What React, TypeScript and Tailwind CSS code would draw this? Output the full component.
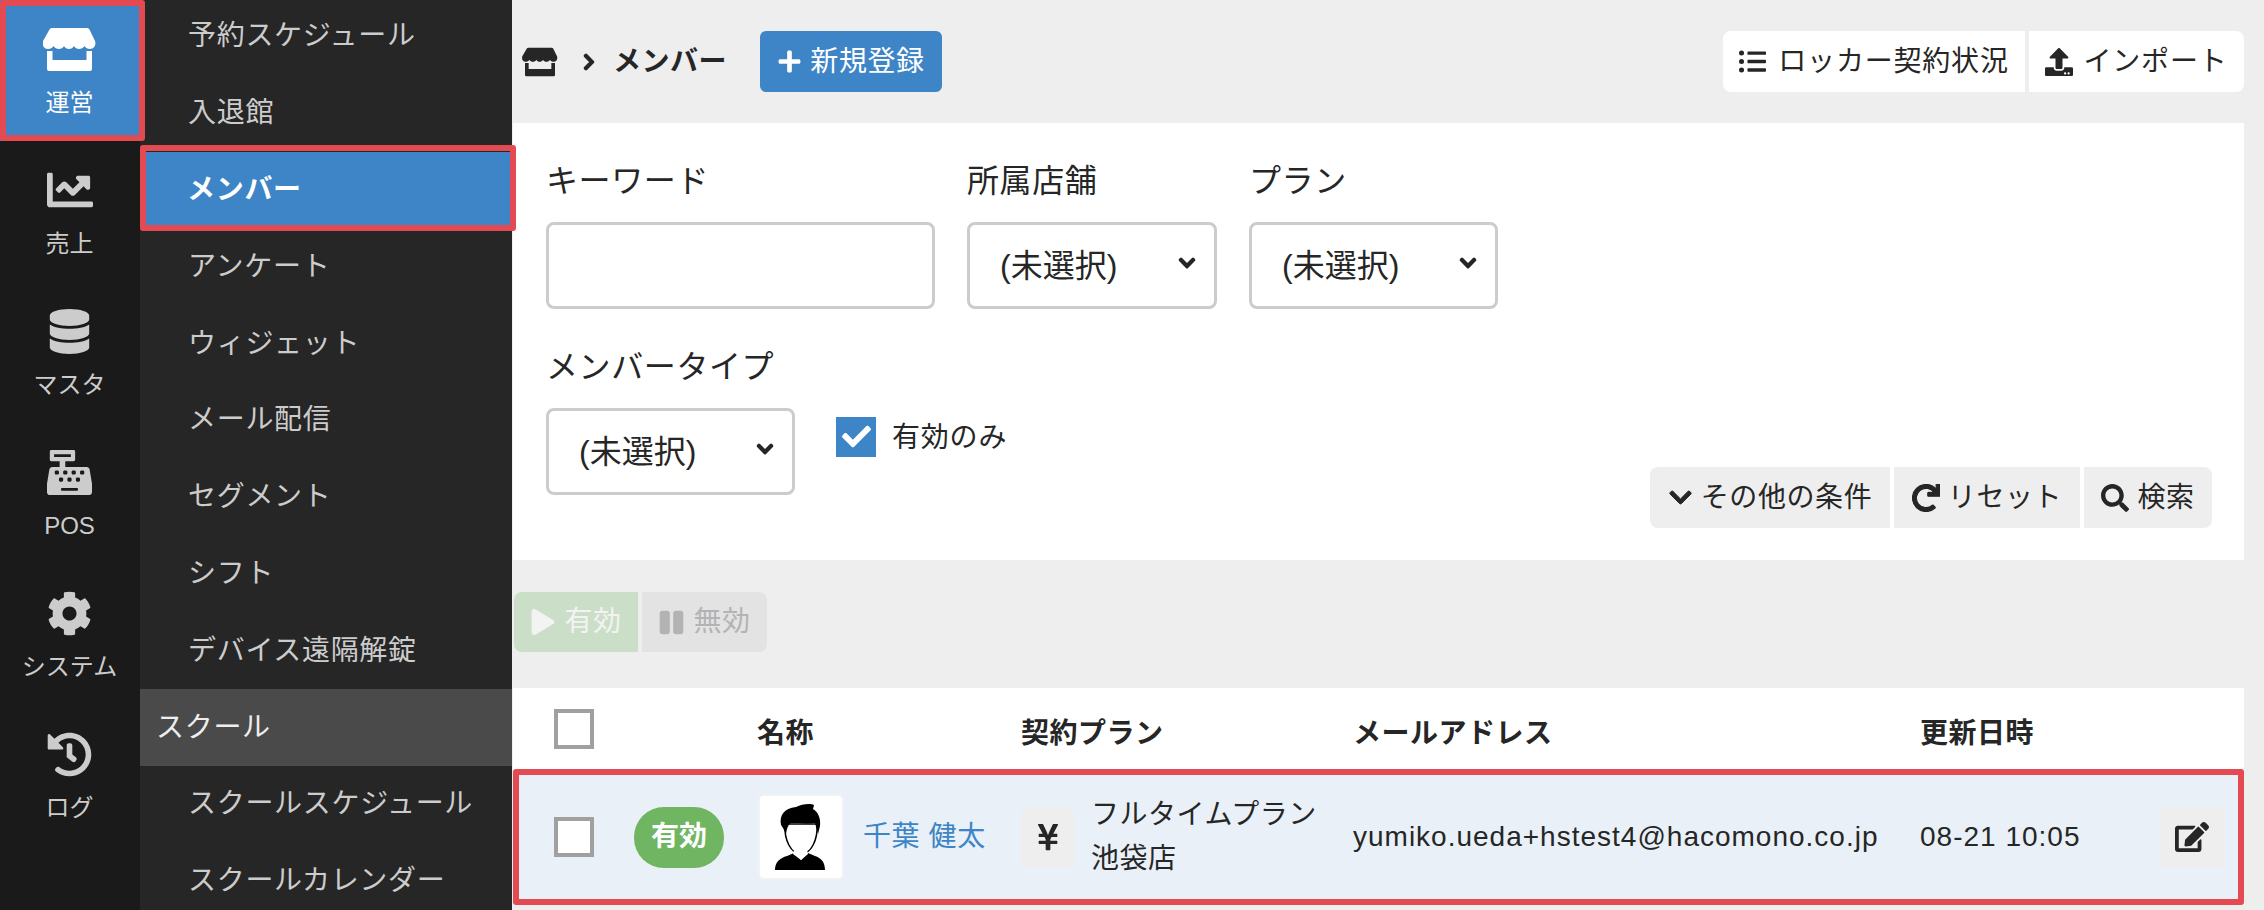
import React from 'react';
import {
  FaChartLine,
  FaDatabase,
  FaCashRegister,
  FaCog,
  FaHistory,
  FaChevronRight,
  FaChevronDown,
  FaPlus,
  FaListUl,
  FaUpload,
  FaRedo,
  FaSearch,
  FaPlay,
  FaPause,
  FaCheck,
  FaYenSign,
  FaEdit,
} from 'react-icons/fa';

function StoreIcon({ className }: { className?: string }) {
  return (
    <svg viewBox="0 0 53 45" fill="currentColor" className={className}>
      <path d="M9 1h35c1 0 2 .6 2.5 1.6L52 14c1.5 4-1 8-5 8-2.5 0-4.5-1-5.5-3-1 2-3.5 3-5.5 3s-4-1-5-3c-1 2-3 3-5 3s-4-1-5-3c-1 2-3 3-5 3s-4.5-1-5.5-3c-1 2-3 3-5.5 3-4 0-6.5-4-5-8L6.5 2.6C7 1.6 8 1 9 1z" />
      <path d="M4 24h5.5v9h34v-9H49v18a2 2 0 0 1-2 2H6a2 2 0 0 1-2-2z" />
    </svg>
  );
}

const railItems = [
  { label: '運営', icon: StoreIcon, active: true, size: 'w-[53px] h-[45px]' },
  { label: '売上', icon: FaChartLine, size: 'w-[46px] h-[46px]' },
  { label: 'マスタ', icon: FaDatabase, size: 'w-[45px] h-[45px]' },
  { label: 'POS', icon: FaCashRegister, size: 'w-[45px] h-[45px]' },
  { label: 'システム', icon: FaCog, size: 'w-[45px] h-[45px]' },
  { label: 'ログ', icon: FaHistory, size: 'w-[45px] h-[45px]' },
];

const menuItems = [
  { label: '予約スケジュール' },
  { label: '入退館' },
  { label: 'メンバー', active: true },
  { label: 'アンケート' },
  { label: 'ウィジェット' },
  { label: 'メール配信' },
  { label: 'セグメント' },
  { label: 'シフト' },
  { label: 'デバイス遠隔解錠' },
  { label: 'スクール', header: true },
  { label: 'スクールスケジュール' },
  { label: 'スクールカレンダー' },
];

function Rail() {
  return (
    <div className="w-[140px] shrink-0 bg-[#1a1a1a] flex flex-col">
      {railItems.map((item) => {
        const Icon = item.icon;
        return (
          <div
            key={item.label}
            className={`relative h-[141px] shrink-0 flex flex-col items-center pt-[26px] pr-[1px] ${item.active ? 'bg-[#3d85c6] text-white' : 'text-[#cccccc]'}`}
          >
            <div className="h-[46px] flex items-center">
              <Icon className={item.size} />
            </div>
            <div className="mt-[13px] text-[24px] leading-[36px]">{item.label}</div>
            {item.active && (
              <div className="absolute left-0 top-0 w-[145px] h-[141px] border-[6px] border-[#e34a51] rounded-[3px] pointer-events-none z-10" />
            )}
          </div>
        );
      })}
    </div>
  );
}

function SubMenu() {
  return (
    <div className="w-[372px] shrink-0 bg-[#262626] flex flex-col">
      <div className="-mt-[2px] flex flex-col tracking-[0.7px]">
        {menuItems.map((item) => (
          <div
            key={item.label}
            className={`relative h-[76.8px] shrink-0 flex items-center text-[28px] ${
              item.header
                ? 'bg-[#4a4a4a] text-[#eeeeee] pl-[16px]'
                : item.active
                  ? 'bg-[#3d85c6] text-white font-bold pl-[47px]'
                  : 'text-[#cccccc] pl-[48px]'
            }`}
          >
            {item.label}
            {item.active && (
              <div className="absolute left-0 -right-[4px] -top-[7px] -bottom-[3px] border-[6px] border-[#e34a51] rounded-[3px] pointer-events-none z-10" />
            )}
          </div>
        ))}
      </div>
    </div>
  );
}

function SelectBox({ width }: { width: string }) {
  return (
    <div className={`${width} h-[87px] border-[3px] border-[#cccccc] rounded-[8px] bg-white flex items-center justify-between pl-[30px] pr-[18px] text-[32px] text-[#262626]`}>
      <span>(未選択)</span>
      <FaChevronDown className="text-[18px] -mt-[6px] stroke-[40]" />
    </div>
  );
}

function Field({ label, children }: { label: string; children: React.ReactNode }) {
  return (
    <div className="flex flex-col">
      <div className="h-[44px] mt-[3px] mb-[19px] text-[32px] leading-[44px] text-[#262626] tracking-[0.6px] whitespace-nowrap">{label}</div>
      {children}
    </div>
  );
}

function Filters() {
  return (
    <div className="ml-[1px] mr-[20px] bg-white pl-[33px] pr-[32px] pt-[33px] pb-[32px] flex flex-col">
      <div className="flex gap-[32px] h-[153px]">
        <Field label="キーワード">
          <div className="w-[389px] h-[87px] border-[3px] border-[#cccccc] rounded-[8px] bg-white" />
        </Field>
        <Field label="所属店舗">
          <SelectBox width="w-[250px]" />
        </Field>
        <Field label="プラン">
          <SelectBox width="w-[249px]" />
        </Field>
      </div>
      <div className="flex items-start mt-[33px]">
        <Field label="メンバータイプ">
          <SelectBox width="w-[249px]" />
        </Field>
        <div className="flex items-center ml-[41px] mt-[72px]">
          <div className="w-[40px] h-[40px] bg-[#3d85c6] flex items-center justify-center text-white">
            <FaCheck className="text-[29px]" />
          </div>
          <span className="ml-[16px] mt-[3px] text-[28px] text-[#262626] tracking-[0.8px]">有効のみ</span>
        </div>
        <div className="ml-auto mt-[125px] flex gap-[4px] text-[28px] text-[#262626] tracking-[0.6px]">
          <div className="w-[240px] h-[61px] bg-[#eeeeee] rounded-l-[8px] flex items-center justify-center gap-[8px]">
            <FaChevronDown className="text-[25px] stroke-[20]" />
            <span>その他の条件</span>
          </div>
          <div className="w-[186px] h-[61px] bg-[#eeeeee] flex items-center justify-center gap-[8px]">
            <FaRedo className="text-[28px] stroke-[20]" />
            <span>リセット</span>
          </div>
          <div className="w-[128px] h-[61px] bg-[#eeeeee] rounded-r-[8px] flex items-center justify-center gap-[8px]">
            <FaSearch className="text-[28px]" />
            <span>検索</span>
          </div>
        </div>
      </div>
    </div>
  );
}

const gridCols = 'grid grid-cols-[80px_123px_264px_332px_567px_240px_64px] items-center pl-[41px]';

function Avatar() {
  return (
    <svg viewBox="0 0 82 82" className="w-[82px] h-[82px]">
      <path d="M15 74C15 66 20 62 27 60L34 57L41 64L48 57L55 60C61 62 65 66 65 74Z" fill="#000" />
      <path d="M25 28C24 44 31 58 41 58C51 58 58 44 57 28Z" fill="#fff" stroke="#000" strokeWidth="1.5" />
      <path d="M33 58L41 64L48 58L47 54H34Z" fill="#fff" />
      <path d="M21 29C19 20 24 12 36 11C42 8 50 7 54 9L53 13C58 16 61 22 60 30L58 38L55 27C48 28 38 27 31 27C28 29 27 32 26 38L23 32Z" fill="#000" />
    </svg>
  );
}

function MemberTable() {
  return (
    <div className="ml-[1px] mr-[20px] bg-white flex flex-col">
      <div className={`${gridCols} h-[81px] text-[28px] font-bold text-[#262626] tracking-[0.5px]`}>
        <div className="w-[40px] h-[40px] border-[4px] border-[#a0a0a0] bg-white" />
        <div />
        <div className="pt-[10px]">名称</div>
        <div className="pt-[10px]">契約プラン</div>
        <div className="pt-[10px]">メールアドレス</div>
        <div className="pt-[10px]">更新日時</div>
        <div />
      </div>
      <div className={`${gridCols} h-[136px] bg-[#e9f0f7] ring-[6px] ring-inset ring-[#e34a51] rounded-[3px] text-[#262626] text-[28px]`}>
        <div className="w-[40px] h-[40px] border-[4px] border-[#a0a0a0] bg-white" />
        <div className="w-[90px] h-[61px] rounded-[30px] bg-[#70b561] text-white font-bold flex items-center justify-center">
          有効
        </div>
        <div className="flex items-center">
          <div className="ml-[3px] w-[82px] h-[82px] bg-white rounded-[4px] shrink-0 ring-[2px] ring-[#f0f3f6]">
            <Avatar />
          </div>
          <span className="ml-[21px] text-[#3d85c6] whitespace-nowrap tracking-[0.6px]">千葉 健太</span>
        </div>
        <div className="flex items-center">
          <div className="w-[53px] h-[61px] rounded-[6px] bg-[#eeeeee] flex items-center justify-center">
            <FaYenSign className="text-[30px]" />
          </div>
          <div className="ml-[17px] leading-[44px] whitespace-nowrap tracking-[0.5px]">
            <div>フルタイムプラン</div>
            <div>池袋店</div>
          </div>
        </div>
        <div className="whitespace-nowrap tracking-[1px]">yumiko.ueda+hstest4@hacomono.co.jp</div>
        <div className="whitespace-nowrap tracking-[1px]">08-21 10:05</div>
        <div className="w-[64px] h-[61px] rounded-[6px] bg-[#eeeeee] flex items-center justify-center">
          <FaEdit className="text-[34px]" />
        </div>
      </div>
    </div>
  );
}

export default function App() {
  return (
    <div className="w-[2264px] h-[910px] overflow-hidden flex font-['Liberation_Sans','Noto_Sans_CJK_JP',sans-serif]">
      <Rail />
      <SubMenu />
      <div className="flex-1 min-w-0 bg-[#eeeeee] flex flex-col">
        <div className="h-[123px] shrink-0 flex items-center pl-[10px] pr-[20px] text-[#262626]">
          <StoreIcon className="w-[36px] h-[30px]" />
          <FaChevronRight className="ml-[22px] text-[18px] stroke-[40]" />
          <span className="ml-[15px] text-[28px] font-bold tracking-[0.5px]">メンバー</span>
          <div className="ml-[33px] w-[182px] h-[61px] bg-[#3d85c6] rounded-[6px] flex items-center justify-center gap-[8px] text-white text-[28px] tracking-[0.6px]">
            <FaPlus className="text-[25px]" />
            <span>新規登録</span>
          </div>
          <div className="ml-auto flex gap-[4px] text-[28px] tracking-[0.8px]">
            <div className="w-[302px] h-[61px] bg-white rounded-l-[8px] flex items-center justify-center gap-[12px]">
              <FaListUl className="text-[27px]" />
              <span>ロッカー契約状況</span>
            </div>
            <div className="w-[215px] h-[61px] bg-white rounded-r-[8px] flex items-center justify-center gap-[10px]">
              <FaUpload className="text-[28px]" />
              <span>インポート</span>
            </div>
          </div>
        </div>
        <Filters />
        <div className="shrink-0 pt-[32px] pb-[36px] pl-[2px] flex gap-[4px] text-[28px] tracking-[0.6px]">
          <div className="w-[124px] h-[60px] bg-[#cbdfc8] rounded-l-[8px] text-[#f3f3f3] flex items-center justify-center gap-[8px]">
            <FaPlay className="text-[26px]" />
            <span>有効</span>
          </div>
          <div className="w-[125px] h-[60px] bg-[#e3e3e3] rounded-r-[8px] text-[#b3b3b3] flex items-center justify-center gap-[8px]">
            <FaPause className="text-[27px]" />
            <span>無効</span>
          </div>
        </div>
        <MemberTable />
      </div>
    </div>
  );
}
